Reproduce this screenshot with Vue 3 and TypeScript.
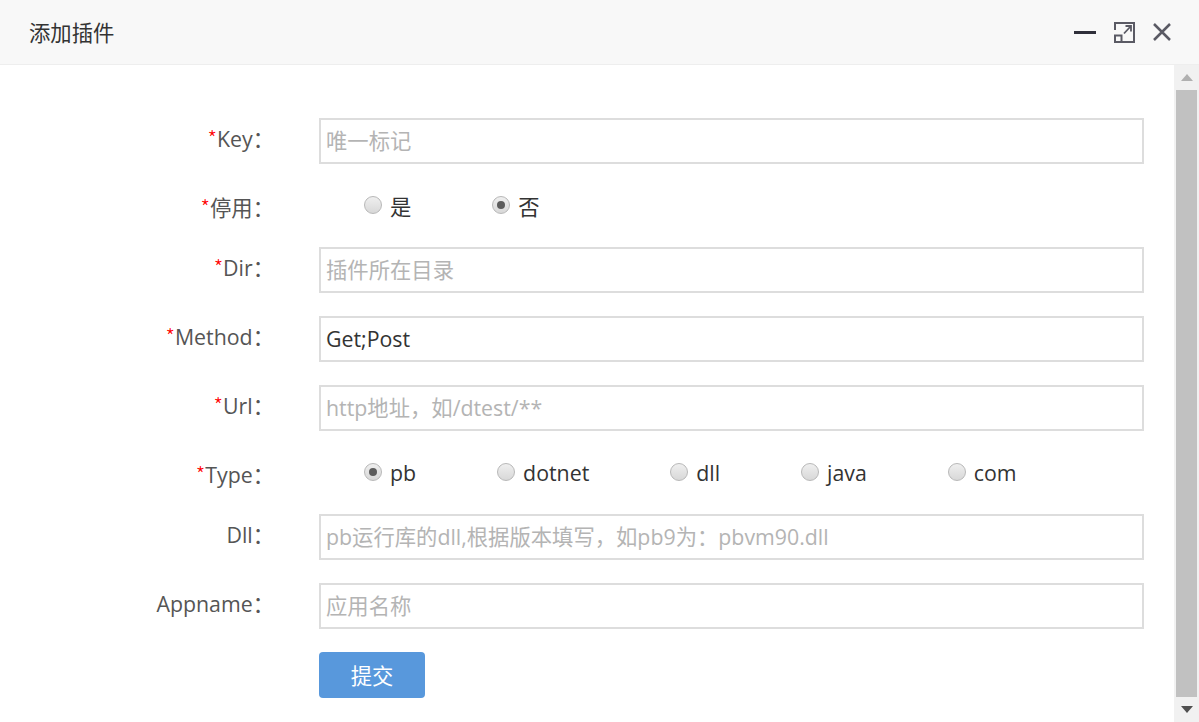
<script setup lang="ts">
interface Opt { label: string; checked?: boolean }
interface Field {
  label: string
  required?: boolean
  kind: 'input' | 'radio'
  placeholder?: string
  value?: string
  options?: Opt[]
}
const fields: Field[] = [
  { label: 'Key', required: true, kind: 'input', placeholder: '唯一标记' },
  { label: '停用', required: true, kind: 'radio', options: [{ label: '是' }, { label: '否', checked: true }] },
  { label: 'Dir', required: true, kind: 'input', placeholder: '插件所在目录' },
  { label: 'Method', required: true, kind: 'input', value: 'Get;Post' },
  { label: 'Url', required: true, kind: 'input', placeholder: 'http地址，如/dtest/**' },
  { label: 'Type', required: true, kind: 'radio', options: [{ label: 'pb', checked: true }, { label: 'dotnet' }, { label: 'dll' }, { label: 'java' }, { label: 'com' }] },
  { label: 'Dll', kind: 'input', placeholder: 'pb运行库的dll,根据版本填写，如pb9为：pbvm90.dll' },
  { label: 'Appname', kind: 'input', placeholder: '应用名称' }
]
</script>

<template>
  <div class="dialog">
    <header class="head">
      <span class="title">添加插件</span>
      <div class="tools">
        <svg width="22" height="22" viewBox="0 0 22 22"><rect x="0" y="10" width="22" height="3" fill="#2f2f3a" /></svg>
        <svg width="21" height="21" viewBox="0 0 21 21" fill="none" stroke="#5a5a64" stroke-width="2">
          <path d="M1 8V1H20V20H8" />
          <rect x="1" y="13.5" width="6.5" height="6.5" />
          <path d="M10 11.5L16.5 4.5M11.5 4H17V9.5" stroke-width="1.8" />
        </svg>
        <svg width="18" height="18" viewBox="0 0 18 18" fill="none" stroke="#5a5a64" stroke-width="2.5"><path d="M1 1L17 17M17 1L1 17" /></svg>
      </div>
    </header>
    <div class="body">
      <form class="form" @submit.prevent>
        <div v-for="f in fields" :key="f.label" class="row" :class="f.kind">
          <label class="lab"><span v-if="f.required" class="req">*</span>{{ f.label }}：</label>
          <input v-if="f.kind === 'input'" class="inp" type="text" :placeholder="f.placeholder" :value="f.value" />
          <div v-else class="radios">
            <span v-for="o in f.options" :key="o.label" class="opt">
              <i class="dot" :class="{ on: o.checked }"></i>{{ o.label }}
            </span>
          </div>
        </div>
        <div class="row submit"><button class="btn" type="button">提交</button></div>
      </form>
      <div class="scroll">
        <div class="arrow"><svg width="12" height="7" viewBox="0 0 12 7"><path d="M6 0L12 7H0Z" fill="#b0b0b0" /></svg></div>
        <div class="thumb"></div>
        <div class="arrow"><svg width="12" height="7" viewBox="0 0 12 7"><path d="M0 0H12L6 7Z" fill="#505050" /></svg></div>
      </div>
    </div>
  </div>
</template>

<style>
html, body { margin: 0; background: #fff; overflow: hidden; }
</style>

<style scoped>
.dialog {
  width: 1199px;
  height: 722px;
  display: flex;
  flex-direction: column;
  font-family: "Open Sans", "Noto Sans CJK SC", sans-serif;
  font-size: 21.33px;
  color: #333;
  overflow: hidden;
}
.head {
  height: 64px;
  flex: none;
  box-sizing: content-box;
  border-bottom: 1px solid #eee;
  background: #f8f8f8;
  display: flex;
  align-items: center;
  justify-content: space-between;
  padding: 0 28px 0 29px;
}
.title { color: #333; margin-top: -1px; }
.tools { display: flex; align-items: center; gap: 18px; }
.tools svg { display: block; }
.body { flex: 1; min-height: 0; display: flex; }
.form { flex: 1; padding-top: 53px; }
.row { display: flex; align-items: center; }
.row.input { height: 46px; margin-bottom: 23px; }
.row.radio { height: 37px; margin-bottom: 23px; }
.lab {
  width: 274px;
  flex: none;
  text-align: right;
  color: #555;
  margin-right: 45px;
  white-space: nowrap;
}
.row.input .lab { margin-top: -7px; }
.row.radio .lab { margin-top: 2px; }
.req { color: #f00; font-family: "Noto Sans CJK SC", sans-serif; font-weight: 300; }
.inp {
  width: 825px;
  height: 46px;
  box-sizing: border-box;
  border: 2px solid #ddd;
  padding: 0 5px 2px;
  outline: none;
  background: #fff;
  font: inherit;
  color: #333;
}
.inp::placeholder { color: #b4b4b4; opacity: 1; }
.radios { display: flex; padding-left: 45px; gap: 81px; color: #333; }
.opt { display: flex; align-items: center; gap: 8px; }
.dot {
  width: 18px;
  height: 18px;
  box-sizing: border-box;
  border-radius: 50%;
  border: 1px solid #b8b8b8;
  background: linear-gradient(#efefef, #d8d8d8);
  display: flex;
  align-items: center;
  justify-content: center;
  margin-top: -1px;
}
.dot.on::after {
  content: "";
  width: 8px;
  height: 8px;
  border-radius: 50%;
  background: #5c5c5c;
}
.row.submit { padding-left: 319px; }
.btn {
  width: 106px;
  height: 46px;
  border: 0;
  border-radius: 4px;
  background: #5898dc;
  color: #fff;
  font: inherit;
  padding: 0 0 2px;
}
.scroll {
  width: 25px;
  flex: none;
  background: #f1f1f1;
  display: flex;
  flex-direction: column;
  align-items: center;
}
.arrow { height: 25px; flex: none; display: flex; align-items: center; justify-content: center; width: 100%; }
.thumb { flex: 1; width: 21px; background: #c1c1c1; }
</style>
